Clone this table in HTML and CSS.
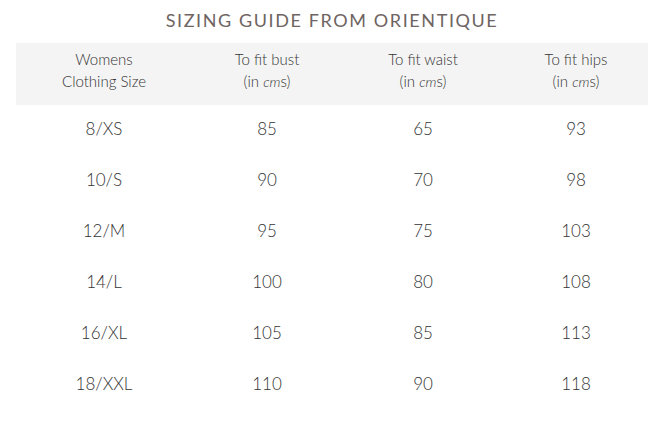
FILE: index.html
```html
<!DOCTYPE html>
<html>
<head>
<meta charset="utf-8">
<link rel="stylesheet" href="styles.css">
</head>
<body>
<div class="page">
  <h1 class="title">SIZING GUIDE FROM ORIENTIQUE</h1>
  <div class="table">
    <div class="row head">
      <div class="cell">Womens<br>Clothing Size</div>
      <div class="cell">To fit bust<br>(in <i>cm</i>s)</div>
      <div class="cell">To fit waist<br>(in <i>cm</i>s)</div>
      <div class="cell">To fit hips<br>(in <i>cm</i>s)</div>
    </div>
    <div class="row"><div class="cell">8/XS</div><div class="cell">85</div><div class="cell">65</div><div class="cell">93</div></div>
    <div class="row"><div class="cell">10/S</div><div class="cell">90</div><div class="cell">70</div><div class="cell">98</div></div>
    <div class="row"><div class="cell">12/M</div><div class="cell">95</div><div class="cell">75</div><div class="cell">103</div></div>
    <div class="row"><div class="cell">14/L</div><div class="cell">100</div><div class="cell">80</div><div class="cell">108</div></div>
    <div class="row"><div class="cell">16/XL</div><div class="cell">105</div><div class="cell">85</div><div class="cell">113</div></div>
    <div class="row"><div class="cell">18/XXL</div><div class="cell">110</div><div class="cell">90</div><div class="cell">118</div></div>
  </div>
</div>
</body>
</html>
```
FILE: styles.css
```css
html, body {
  margin: 0;
  padding: 0;
  background: #ffffff;
}
.page {
  width: 659px;
  height: 427px;
  padding: 0 11px 0 16px;
  box-sizing: border-box;
  font-family: "Lato", "Open Sans", sans-serif;
  font-weight: 300;
  color: #333333;
}
.title {
  margin: 0;
  height: 43px;
  display: flex;
  align-items: center;
  justify-content: center;
  padding-bottom: 4px;
  box-sizing: border-box;
  font-size: 18px;
  font-weight: 400;
  letter-spacing: 1.6px;
  color: #6e6461;
}
.table {
  display: flex;
  flex-direction: column;
}
.row {
  display: grid;
  grid-template-columns: 176px 150px 162px 144px;
  height: 51px;
  align-items: center;
  font-size: 17px;
}
.row.head {
  height: 62px;
  background: #f4f4f4;
  font-size: 15px;
  line-height: 22px;
  margin-bottom: -2px;
}
.row.head .cell {
  padding-bottom: 8px;
}
.cell {
  text-align: center;
}
.cell i {
  font-size: 14px;
  font-style: italic;
  font-weight: 300;
}
```
